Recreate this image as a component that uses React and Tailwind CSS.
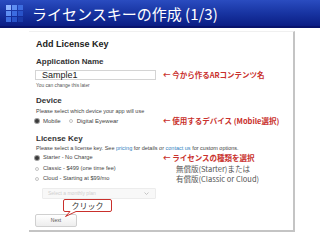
import React from "react";

const sans = { fontFamily: '"Liberation Sans", Arial, sans-serif' };

function Radio({ on }) {
  return on ? (
    <span className="block w-[4px] h-[4px] rounded-full bg-[#3a3a3a] ring-1 ring-[#9a9a9a] shrink-0" />
  ) : (
    <span className="block w-[4px] h-[4px] rounded-full border border-[#c4c4c4] bg-white shrink-0" />
  );
}

function Note({ children, className = "" }) {
  return (
    <span
      className={"text-[7.5px] leading-none font-bold text-[#c9302c] whitespace-nowrap " + className}
      style={{ fontFamily: '"Noto Sans CJK JP", sans-serif' }}
    >
      {children}
    </span>
  );
}

function Gray({ children }) {
  return (
    <span
      className="pl-[13px] text-[7.5px] leading-none text-[#555555] whitespace-nowrap"
      style={{ fontFamily: '"Noto Sans CJK JP", sans-serif' }}
    >
      {children}
    </span>
  );
}

function HeaderIcon() {
  const colors = [
    "#8fb4ff", "#5f8ff2", "#3c6ce0",
    "#5f8ff2", "#3c6ce0", "#2852c8",
    "#3c6ce0", "#2852c8", "#1a3aa8",
  ];
  return (
    <div className="grid grid-cols-3 gap-[1px] w-[17px] h-[17px]">
      {colors.map((c, i) => (
        <span key={i} className="block w-[5px] h-[5px]" style={{ background: c }} />
      ))}
    </div>
  );
}

export default function App() {
  return (
    <div className="w-[320px] h-[240px] overflow-hidden bg-white relative">
      {/* slide title bar */}
      <div className="h-[28px] flex items-center pl-[6px] gap-[9px] bg-gradient-to-b from-[#2a4cc0] via-[#1834a2] to-[#0b1d84] border-b-2 border-[#08136c]">
        <HeaderIcon />
        <span
          className="text-[15px] leading-none text-white"
          style={{ fontFamily: '"Noto Sans CJK JP", sans-serif' }}
        >
          ライセンスキーの作成 (1/3)
        </span>
      </div>

      {/* screenshot panel */}
      <div
        className="relative ml-[29px] mt-[3px] w-[266px] h-[201px] border-t border-t-[#f0f0f0] border-r-2 border-r-[#c4c4c4] border-b-2 border-b-[#c4c4c4] pl-[7px] text-[#333333]"
        style={sans}
      >
        <div className="mt-[6px] h-[12px] flex items-center text-[9px] font-bold leading-none text-[#222]">
          Add License Key
        </div>

        <div className="mt-[7px] h-[10px] flex items-center text-[8px] font-bold leading-none text-[#333]">
          Application Name
        </div>

        <div className="mt-[3px] h-[10px] flex items-center">
          <div className="ml-[-1px] w-[121px] h-[10px] border border-[#d4d4d4] pl-[6px] flex items-center text-[9px] leading-none text-[#222]">
            Sample1
          </div>
          <Note className="ml-[7px]">← 今から作るARコンテンツ名</Note>
        </div>

        <div className="mt-[3px] h-[6px] flex items-center text-[4.8px] leading-none text-[#555]">
          You can change this later
        </div>

        <div className="mt-[7px] h-[10px] flex items-center text-[8px] font-bold leading-none text-[#333]">
          Device
        </div>

        <div className="mt-[3px] h-[6px] flex items-center text-[5.5px] leading-none text-[#444]">
          Please select which device your app will use
        </div>

        <div className="mt-[2px] h-[8px] flex items-center">
          <div className="w-[127px] flex items-center text-[6px] leading-none text-[#444]">
            <span className="ml-[-1px]"><Radio on /></span>
            <span className="ml-[4px]">Mobile</span>
            <span className="ml-[8px]"><Radio /></span>
            <span className="ml-[4px]">Digital Eyewear</span>
          </div>
          <Note>← 使用するデバイス (Mobile選択)</Note>
        </div>

        <div className="mt-[9px] h-[10px] flex items-center text-[8px] font-bold leading-none text-[#333]">
          License Key
        </div>

        <div className="mt-[2px] h-[6px] flex items-center text-[5.5px] leading-none text-[#444] whitespace-nowrap">
          Please select a license key. See&nbsp;<span className="text-[#2f7fc0]">pricing</span>&nbsp;for details or&nbsp;
          <span className="text-[#2f7fc0]">contact us</span>&nbsp;for custom options.
        </div>

        <div className="mt-[2px] h-[8px] flex items-center">
          <div className="w-[127px] flex items-center text-[5.7px] leading-none text-[#444]">
            <span className="ml-[-1px]"><Radio on /></span>
            <span className="ml-[4px]">Starter - No Charge</span>
          </div>
          <Note>← ライセンスの種類を選択</Note>
        </div>

        <div className="mt-[3px] h-[8px] flex items-center">
          <div className="w-[127px] flex items-center text-[5.7px] leading-none text-[#444]">
            <span className="ml-[-1px]"><Radio /></span>
            <span className="ml-[4px]">Classic - $499 (one time fee)</span>
          </div>
          <Gray>無償版(Starter)または</Gray>
        </div>

        <div className="mt-[2px] h-[8px] flex items-center">
          <div className="w-[127px] flex items-center text-[5.7px] leading-none text-[#444]">
            <span className="ml-[-1px]"><Radio /></span>
            <span className="ml-[4px]">Cloud - Starting at $99/mo</span>
          </div>
          <Gray>有償版(Classic or Cloud)</Gray>
        </div>

        <div className="mt-[5px] ml-[6px] w-[114px] h-[11px] rounded-[1px] border border-[#ececec] bg-[#f8f8f8] flex items-center justify-between pl-[5px] pr-[6px]">
          <span className="text-[5px] leading-none text-[#cfcfcf]">Select a monthly plan</span>
          <svg width="5" height="3" viewBox="0 0 5 3">
            <path d="M0.5 0.5 L2.5 2.5 L4.5 0.5" fill="none" stroke="#b8b8b8" strokeWidth="0.8" />
          </svg>
        </div>

        <div className="mt-[15px] ml-[-1px] w-[42px] h-[13px] rounded-[2px] border border-[#d0d0d0] bg-gradient-to-b from-white to-[#ededed] flex items-center justify-center text-[5px] leading-none text-[#555]">
          Next
        </div>

        {/* callout */}
        <div className="absolute left-[34px] top-[167px] w-[49px] h-[18px]">
          <svg width="49" height="18" viewBox="0 0 49 18" className="absolute inset-0">
            <path
              d="M2 0.5 H47 Q48.5 0.5 48.5 2 V11 Q48.5 12.5 47 12.5 H13 L2.5 17.5 L7 12.5 H2 Q0.5 12.5 0.5 11 V2 Q0.5 0.5 2 0.5 Z"
              fill="white"
              stroke="#c9302c"
              strokeWidth="1"
            />
          </svg>
          <div
            className="absolute left-0 top-0 w-[49px] h-[13px] flex items-center justify-center text-[8px] leading-none text-[#333]"
            style={{ fontFamily: '"Noto Sans CJK JP", sans-serif' }}
          >
            クリック
          </div>
        </div>
      </div>
    </div>
  );
}
